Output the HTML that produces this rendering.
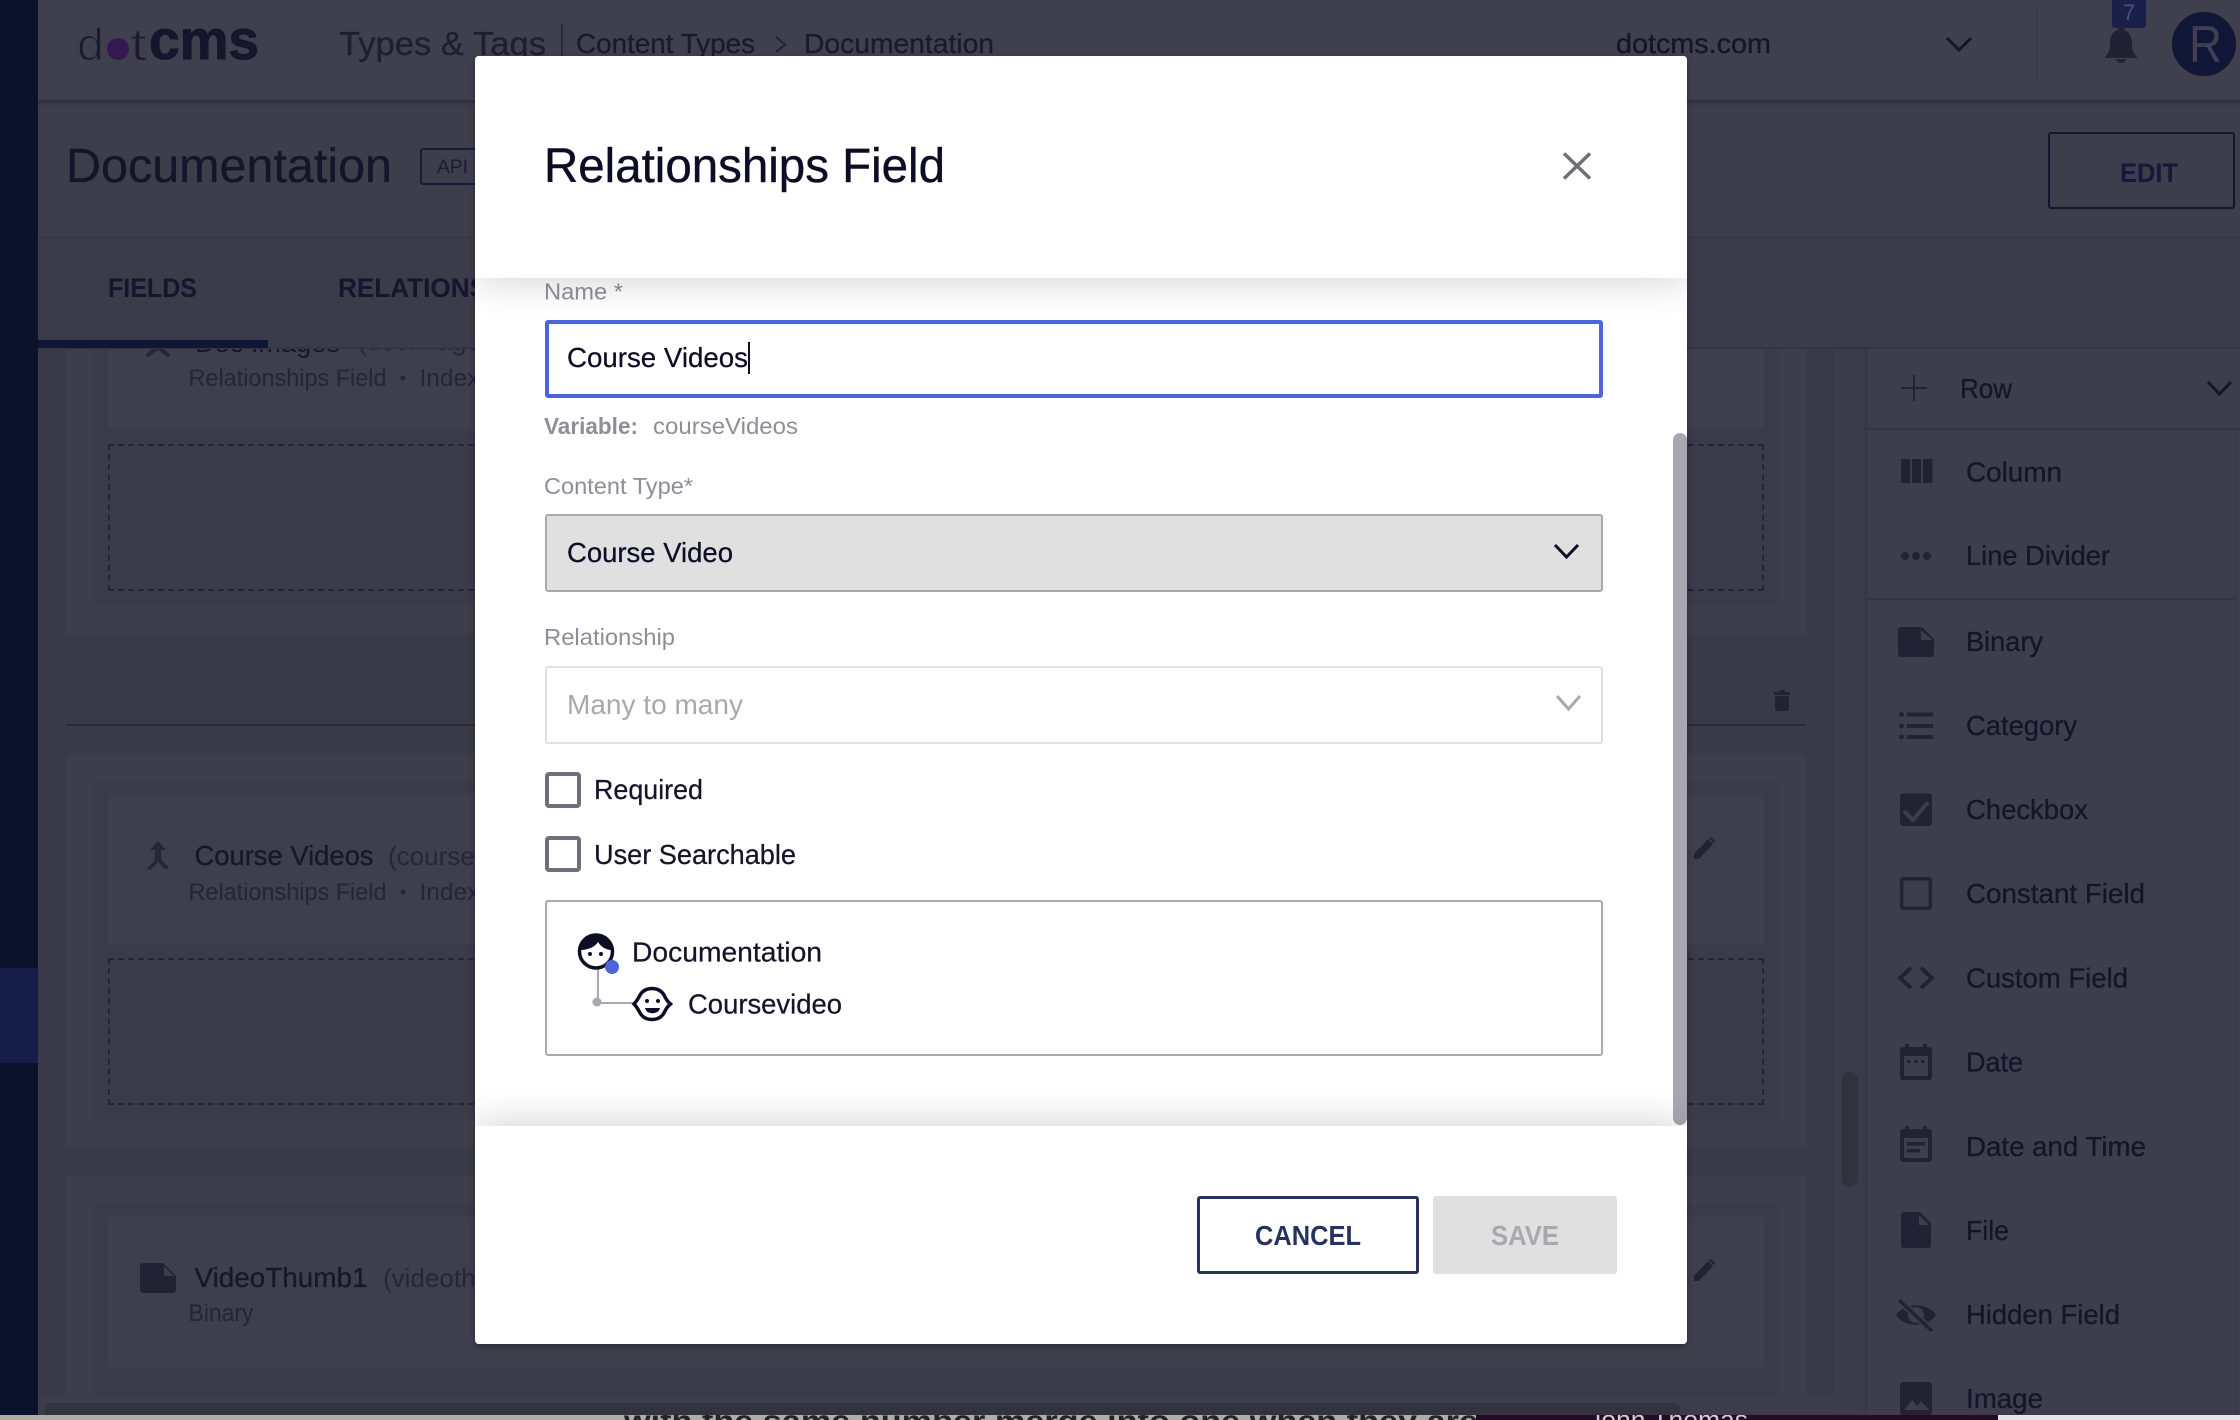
<!DOCTYPE html>
<html lang="en">
<head>
<meta charset="utf-8">
<title>Relationships Field</title>
<style>
html,body{margin:0;padding:0;width:2240px;height:1420px;overflow:hidden;background:#3a3947;font-family:"Liberation Sans",sans-serif}
.a{position:absolute;box-sizing:border-box}
svg{position:absolute;left:0;top:0;display:block}
svg text{font-family:"Liberation Sans",sans-serif}
#bg{position:absolute;left:0;top:0;width:2240px;height:1420px;overflow:hidden;filter:blur(.3px)}
#bg text{stroke-width:.3px}
#modal{position:absolute;left:475px;top:56px;width:1212px;height:1288px;background:#fff;border-radius:4px;overflow:hidden;box-shadow:0 2px 6px rgba(0,0,0,.3)}
#modalhead{position:absolute;left:0;top:0;width:1212px;height:222px;background:#fff;box-shadow:0 0 40px rgba(0,0,0,.2)}
#modalfoot{position:absolute;left:0;top:1070px;width:1212px;height:218px;background:#fff;box-shadow:0 0 40px rgba(0,0,0,.2)}
</style>
</head>
<body>
<div id="bg">
  <!-- page bands -->
  <div class="a" style="left:0;top:1415px;width:1476px;height:5px;background:#b0aea4"></div>
  <div class="a" style="left:1476px;top:1415px;width:522px;height:5px;background:#240b26"></div>
  <div class="a" style="left:1998px;top:1415px;width:242px;height:5px;background:#e6e6e6"></div>
  <div class="a" style="left:38px;top:0;width:2202px;height:1415px;background:#3a3947"></div>
  <div class="a" style="left:38px;top:0;width:2202px;height:103px;background:#403f4e;border-bottom:3px solid #33323f"></div>
  <div class="a" style="left:38px;top:106px;width:2202px;height:132px;background:#3e3d4b;border-bottom:2px solid #393846"></div>
  <div class="a" style="left:38px;top:238px;width:2202px;height:111px;background:#3c3b49;border-bottom:2px solid #353442"></div>
  <div class="a" style="left:38px;top:340px;width:230px;height:8px;background:#101636"></div>

  <!-- first row -->
  <div class="a" style="left:66px;top:349px;width:1740px;height:285px;background:#3e3d4b"></div>
  <div class="a" style="left:94px;top:349px;width:1684px;height:256px;background:#3b3a48"></div>
  <div class="a" style="left:108px;top:349px;width:1656px;height:80px;background:#3f3e4c"></div>
  <div class="a" style="left:108px;top:444px;width:1656px;height:147px;border:2px dashed #252436"></div>
  <div class="a" style="left:66px;top:724px;width:1740px;height:2px;background:#2a2938"></div>

  <!-- second row -->
  <div class="a" style="left:66px;top:754px;width:1740px;height:393px;background:#3e3d4b"></div>
  <div class="a" style="left:94px;top:782px;width:1684px;height:337px;background:#3b3a48"></div>
  <div class="a" style="left:108px;top:794px;width:1656px;height:150px;background:#3f3e4c"></div>
  <div class="a" style="left:108px;top:958px;width:1656px;height:147px;border:2px dashed #252436"></div>

  <!-- third row -->
  <div class="a" style="left:66px;top:1176px;width:1740px;height:220px;background:#3e3d4b"></div>
  <div class="a" style="left:94px;top:1204px;width:1684px;height:192px;background:#3b3a48"></div>
  <div class="a" style="left:108px;top:1217px;width:1656px;height:150px;background:#3f3e4c"></div>

  <!-- scrollbars -->
  <div class="a" style="left:1835px;top:349px;width:27px;height:1066px;background:#3c3b4a"></div>
  <div class="a" style="left:1842px;top:1072px;width:16px;height:115px;background:#32313e;border-radius:8px"></div>
  <div class="a" style="left:38px;top:1396px;width:1800px;height:19px;background:#3d3c4a"></div>
  <div class="a" style="left:45px;top:1403px;width:1635px;height:12px;background:#33323f;border-radius:6px 6px 0 0"></div>

  <!-- right panel -->
  <div class="a" style="left:1866px;top:349px;width:374px;height:1066px;background:#3e3d4b;border-left:2px solid #383745"></div>
  <div class="a" style="left:2235px;top:429px;width:2px;height:986px;background:#393846"></div>
  <div class="a" style="left:1866px;top:428px;width:374px;height:2px;background:#353442"></div>
  <div class="a" style="left:1866px;top:598px;width:369px;height:2px;background:#353442"></div>

  <!-- left rail -->
  <div class="a" style="left:0;top:0;width:38px;height:1415px;background:#0c122c"></div>
  <div class="a" style="left:0;top:968px;width:38px;height:95px;background:#161d47"></div>

  <!-- header items -->
  <div class="a" style="left:561px;top:24px;width:2px;height:32px;background:#2c2b3b"></div>
  <div class="a" style="left:2036px;top:5px;width:2px;height:78px;background:#3c3b49"></div>
  <div class="a" style="left:2112px;top:0;width:34px;height:28px;background:#1a2049;border-radius:0 0 3px 3px"></div>
  <div class="a" style="left:2172px;top:12px;width:64px;height:64px;background:#101636;border-radius:50%"></div>
  <div class="a" style="left:2048px;top:132px;width:187px;height:77px;border:2px solid #12162f;border-radius:3px"></div>
  <div class="a" style="left:420px;top:148px;width:80px;height:37px;border:2px solid #171c38;border-radius:3px"></div>

  <svg width="2240" height="1420" viewBox="0 0 2240 1420">
    <!-- logo -->
    <text x="77" y="60" font-size="45" fill="#1b1b30" stroke="#403f4e" style="stroke-width:1.2px" textLength="27" lengthAdjust="spacingAndGlyphs">d</text>
    <circle cx="118" cy="49" r="11" fill="#351852"/>
    <text x="130" y="60" font-size="45" fill="#1b1b30" stroke="#403f4e" style="stroke-width:1.2px" textLength="17" lengthAdjust="spacingAndGlyphs">t</text>
    <text x="149" y="59" font-size="56" font-weight="bold" fill="#15152c" textLength="110" lengthAdjust="spacingAndGlyphs" stroke="#15152c" style="stroke-width:1px">cms</text>

    <text x="339" y="55" font-size="33" fill="#1e1e30" stroke="#1e1e30" textLength="207" lengthAdjust="spacingAndGlyphs">Types &amp; Tags</text>
    <text x="576" y="53" font-size="27.5" fill="#1a1a2e" stroke="#1a1a2e" textLength="179" lengthAdjust="spacingAndGlyphs">Content Types</text>
    <path d="M776 37 L785 44.5 L776 52" fill="none" stroke="#222234" stroke-width="2"/>
    <text x="804" y="53" font-size="28" fill="#1a1a2e" stroke="#1a1a2e" textLength="190" lengthAdjust="spacingAndGlyphs">Documentation</text>
    <text x="1616" y="53" font-size="28" fill="#14142b" stroke="#14142b" textLength="155" lengthAdjust="spacingAndGlyphs">dotcms.com</text>
    <path d="M1947 38 L1959 50 L1971 38" fill="none" stroke="#14142b" stroke-width="3"/>
    <text x="2129" y="20" font-size="22" fill="#4a5080" text-anchor="middle">7</text>
    <path d="M2121 26 a3 3 0 0 1 3 4 c7 2 8 9 8 15 c0 6 2 9 5 12 v1 h-32 v-1 c3-3 5-6 5-12 c0-6 1-13 8-15 a3 3 0 0 1 3-4z M2116 59 h10 a5 4 0 0 1 -10 0z" fill="#222133"/>
    <text x="2189" y="62" font-size="52" fill="#3f3e52" textLength="33" lengthAdjust="spacingAndGlyphs">R</text>

    <text x="66" y="182" font-size="48" fill="#14142a" stroke="#14142a" textLength="326" lengthAdjust="spacingAndGlyphs">Documentation</text>
    <text x="437" y="173" font-size="19" fill="#171c38" textLength="31" lengthAdjust="spacingAndGlyphs">API</text>
    <text x="2120" y="182" font-size="27" font-weight="bold" fill="#14183a" textLength="58" lengthAdjust="spacingAndGlyphs">EDIT</text>
    <text x="108" y="297" font-size="27" font-weight="bold" fill="#14162f" textLength="89" lengthAdjust="spacingAndGlyphs">FIELDS</text>
    <text x="338" y="297" font-size="27" font-weight="bold" fill="#14162f" textLength="210" lengthAdjust="spacingAndGlyphs">RELATIONSHIPS</text>

    <!-- field rows -->
    <defs><clipPath id="c1"><rect x="38" y="349" width="2202" height="1071"/></clipPath></defs>
    <g clip-path="url(#c1)">
      <text x="195" y="352" font-size="28" fill="#16162d" textLength="145" lengthAdjust="spacingAndGlyphs">Doc Images</text>
      <text x="358" y="350" font-size="26" fill="#26253a">(docImages)</text>
      <path d="M147 356 L158 347 L169 356" fill="none" stroke="#26253a" stroke-width="4"/>
    </g>
    <text x="188.500" y="386" font-size="24.5" fill="#252438" textLength="198" lengthAdjust="spacingAndGlyphs">Relationships Field</text>
    <circle cx="403" cy="378" r="2.5" fill="#252438"/>
    <text x="419.500" y="386" font-size="24.5" fill="#252438">Indexed</text>

    <path d="M158 841 L150 850 H155 V858 C155 861 153 863 147 868 L150 870 C155 866 158 863 158 861 C160 865 163 867 166 870 L169 867 C165 864 161 861 161 857 V850 H166 Z" fill="#26253a"/>
    <text x="194.500" y="865" font-size="28" fill="#16162d" stroke="#16162d" textLength="179" lengthAdjust="spacingAndGlyphs">Course Videos</text>
    <text x="388" y="865" font-size="26" fill="#26253a">(courseVideos)</text>
    <text x="188.500" y="900" font-size="24.5" fill="#252438" textLength="198" lengthAdjust="spacingAndGlyphs">Relationships Field</text>
    <circle cx="403" cy="892" r="2.5" fill="#252438"/>
    <text x="419.500" y="900" font-size="24.5" fill="#252438">Indexed</text>

    <path d="M143 1263 H163 L176 1276 V1290 a3 3 0 0 1-3 3 H143 a3 3 0 0 1-3-3 V1266 a3 3 0 0 1 3-3z" fill="#232235"/>
    <path d="M164 1266 V1276 H174z" fill="#3e3d4b"/>
    <text x="194.5" y="1287" font-size="28" fill="#16162d" stroke="#16162d" textLength="173" lengthAdjust="spacingAndGlyphs">VideoThumb1</text>
    <text x="383" y="1287" font-size="26" fill="#26253a">(videothumb1)</text>
    <text x="188.500" y="1321" font-size="24.5" fill="#252438" textLength="65" lengthAdjust="spacingAndGlyphs">Binary</text>

    <!-- trash & pencils -->
    <path d="M1774 692 h5 l1-2 h4 l1 2 h5 v3 h-16z M1775 696 h14 v13 a2 2 0 0 1-2 2 h-10 a2 2 0 0 1-2-2z" fill="#232235"/>
    <path d="M1694 859 v-5 l14-15 5 5 -14 15z M1709 838 l2-1 4 4 -1 2z" fill="#232235"/>
    <path d="M1694 1281 v-5 l14-15 5 5 -14 15z M1709 1260 l2-1 4 4 -1 2z" fill="#232235"/>

    <!-- right panel labels -->
    <g font-size="27.5" fill="#14142b" stroke="#14142b">
      <text x="1960" y="398" textLength="52" lengthAdjust="spacingAndGlyphs">Row</text>
      <text x="1966" y="481.500" textLength="96" lengthAdjust="spacingAndGlyphs">Column</text>
      <text x="1966" y="565" textLength="144" lengthAdjust="spacingAndGlyphs">Line Divider</text>
      <text x="1966" y="651" textLength="77" lengthAdjust="spacingAndGlyphs">Binary</text>
      <text x="1966" y="735" textLength="111" lengthAdjust="spacingAndGlyphs">Category</text>
      <text x="1966" y="819" textLength="122" lengthAdjust="spacingAndGlyphs">Checkbox</text>
      <text x="1966" y="903" textLength="179" lengthAdjust="spacingAndGlyphs">Constant Field</text>
      <text x="1966" y="987.500" textLength="162" lengthAdjust="spacingAndGlyphs">Custom Field</text>
      <text x="1966" y="1071.500" textLength="57" lengthAdjust="spacingAndGlyphs">Date</text>
      <text x="1966" y="1156" textLength="180" lengthAdjust="spacingAndGlyphs">Date and Time</text>
      <text x="1966" y="1240" textLength="43" lengthAdjust="spacingAndGlyphs">File</text>
      <text x="1966" y="1324" textLength="154" lengthAdjust="spacingAndGlyphs">Hidden Field</text>
      <text x="1966" y="1408" textLength="77" lengthAdjust="spacingAndGlyphs">Image</text>
    </g>
    <!-- right panel icons -->
    <g fill="#232235">
      <path d="M1913 375 h2 v12 h12 v2 h-12 v12 h-2 v-12 h-12 v-2 h12z"/>
      <rect x="1901" y="459" width="9" height="24"/><rect x="1912" y="459" width="9" height="24"/><rect x="1923" y="459" width="9.500" height="24"/>
      <circle cx="1905" cy="556" r="4"/><circle cx="1916" cy="556" r="4"/><circle cx="1927" cy="556" r="4"/>
      <path d="M1901 627 H1922 L1934 639 V654 a3 3 0 0 1-3 3 H1901 a3 3 0 0 1-3-3 V630 a3 3 0 0 1 3-3z"/>
      <circle cx="1901.500" cy="714.500" r="2.500"/><circle cx="1901.500" cy="726" r="2.500"/><circle cx="1901.500" cy="737" r="2.500"/>
      <rect x="1907" y="712.500" width="26" height="4"/><rect x="1907" y="724" width="26" height="4"/><rect x="1907" y="735" width="26" height="4"/>
      <rect x="1900" y="793.500" width="32" height="32.500" rx="3"/>
      <path d="M1900 880 a3 3 0 0 1 3-3 h26 a3 3 0 0 1 3 3 v27 a3 3 0 0 1-3 3 h-26 a3 3 0 0 1-3-3z M1903.500 880.500 v26 h25 v-26z" fill-rule="evenodd"/>
      <path d="M1903 1047 h2 v-3 h4 v3 h14 v-3 h4 v3 h2 a3 3 0 0 1 3 3 v27 a3 3 0 0 1-3 3 h-26 a3 3 0 0 1-3-3 v-27 a3 3 0 0 1 3-3z M1904 1056 v20 h24 v-20z" fill-rule="evenodd"/>
      <rect x="1907" y="1060" width="3.500" height="3"/><rect x="1914" y="1060" width="3.500" height="3"/><rect x="1921" y="1060" width="3.500" height="3"/>
      <path d="M1903 1129 h2 v-3 h4 v3 h14 v-3 h4 v3 h2 a3 3 0 0 1 3 3 v27 a3 3 0 0 1-3 3 h-26 a3 3 0 0 1-3-3 v-27 a3 3 0 0 1 3-3z M1904 1138 v20 h24 v-20z" fill-rule="evenodd"/>
      <rect x="1907" y="1142" width="18" height="3.500"/><rect x="1907" y="1149" width="13" height="3.500"/>
      <path d="M1904 1212 H1920 L1931 1223 V1245 a3 3 0 0 1-3 3 H1904 a3 3 0 0 1-3-3 V1215 a3 3 0 0 1 3-3z"/>
      <path d="M1896 1315 C1904 1302 1928 1302 1936 1315 C1928 1328 1904 1328 1896 1315z M1916 1307 a8 8 0 1 0 .01 0z" fill-rule="evenodd"/>
      <rect x="1900" y="1382" width="32" height="33" rx="3"/>
    </g>
    <path d="M1919 1215 V1225 H1929z" fill="#3e3d4b"/>
    <path d="M1921 630 V640 H1932z" fill="#3e3d4b"/>
    <path d="M1904 811 L1913 820 L1928 802" fill="none" stroke="#3e3d4b" stroke-width="4"/>
    <path d="M1911 968 L1900 978 L1911 988 M1921 968 L1932 978 L1921 988" fill="none" stroke="#232235" stroke-width="4"/>
    <path d="M1899 1300 L1932 1331" stroke="#3e3d4b" stroke-width="7"/>
    <path d="M1899 1300 L1932 1331" stroke="#232235" stroke-width="3.500"/>
    <path d="M1904 1410 L1912 1400 L1917 1406 L1921 1401 L1929 1410z" fill="#3e3d4b"/>
    <path d="M2208 382 L2219.500 394 L2231 382" fill="none" stroke="#14142b" stroke-width="3"/>

    <!-- bottom peek -->
    <defs><clipPath id="c2"><rect x="0" y="1415" width="2240" height="5"/></clipPath></defs>
    <g clip-path="url(#c2)">
      <text x="624" y="1431" font-size="30" font-weight="bold" fill="#242424" textLength="854" lengthAdjust="spacingAndGlyphs">with the same number merge into one when they are</text>
      <text x="1588" y="1429" font-size="27" fill="#d8c8d8" textLength="160" lengthAdjust="spacingAndGlyphs">John Thomas</text>
    </g>
  </svg>
</div>

<div id="modal">
  <!-- inputs -->
  <div class="a" style="left:70px;top:264px;width:1058px;height:78px;border:4px solid #4c64dc;border-radius:3px;background:#fff"></div>
  <div class="a" style="left:70px;top:458px;width:1058px;height:78px;border:2px solid #a9a8b1;border-radius:3px;background:#e0e0e0"></div>
  <div class="a" style="left:70px;top:610px;width:1058px;height:78px;border:2px solid #e0e0e0;border-radius:3px;background:#fff"></div>
  <div class="a" style="left:70px;top:716px;width:36px;height:36px;border:4px solid #6f6e7b;border-radius:4px;background:#fff"></div>
  <div class="a" style="left:70px;top:780px;width:36px;height:36px;border:4px solid #6f6e7b;border-radius:4px;background:#fff"></div>
  <div class="a" style="left:70px;top:844px;width:1058px;height:156px;border:2px solid #a9a8b1;border-radius:3px;background:#fff"></div>
  <div class="a" style="left:1198px;top:377px;width:14px;height:692px;background:#a9a8b1;border-radius:7px"></div>

  <svg width="1212" height="1288" viewBox="475 56 1212 1288">
    <text x="544" y="299.500" font-size="23.500" fill="#8f8e98" textLength="79" lengthAdjust="spacingAndGlyphs">Name *</text>
    <text x="567" y="367" font-size="28" fill="#0d0d25" stroke="#0d0d25" stroke-width=".25" textLength="181" lengthAdjust="spacingAndGlyphs">Course Videos</text>
    <rect x="748" y="342" width="2" height="32" fill="#0d0d25"/>
    <text x="544" y="434" font-size="23.500" font-weight="bold" fill="#8f8e98" textLength="94" lengthAdjust="spacingAndGlyphs">Variable:</text>
    <text x="653" y="434" font-size="23.500" fill="#8f8e98" textLength="145" lengthAdjust="spacingAndGlyphs">courseVideos</text>
    <text x="544" y="494" font-size="23.500" fill="#8f8e98" textLength="149" lengthAdjust="spacingAndGlyphs">Content Type*</text>
    <text x="567" y="562" font-size="28" fill="#0d0d25" stroke="#0d0d25" stroke-width=".25" textLength="166" lengthAdjust="spacingAndGlyphs">Course Video</text>
    <path d="M1555 545 L1566.500 557 L1578 545" fill="none" stroke="#0d0d25" stroke-width="3"/>
    <text x="544" y="645" font-size="23.500" fill="#8f8e98" textLength="131" lengthAdjust="spacingAndGlyphs">Relationship</text>
    <text x="567" y="714" font-size="28" fill="#a9a8b1" textLength="176" lengthAdjust="spacingAndGlyphs">Many to many</text>
    <path d="M1557 696 L1568.500 709 L1580 696" fill="none" stroke="#a9a8b1" stroke-width="3"/>
    <text x="594" y="799" font-size="28" fill="#14142b" stroke="#14142b" stroke-width=".25" textLength="109" lengthAdjust="spacingAndGlyphs">Required</text>
    <text x="594" y="864" font-size="28" fill="#14142b" stroke="#14142b" stroke-width=".25" textLength="202" lengthAdjust="spacingAndGlyphs">User Searchable</text>

    <path d="M598 968 V1003 H634 M598 1003" fill="none" stroke="#a9a8b1" stroke-width="2"/>
    <circle cx="597" cy="1002" r="4.500" fill="#a9a8b1"/>
    <circle cx="596" cy="951.500" r="16.500" fill="#fff" stroke="#0d0d25" stroke-width="3.500"/>
    <path d="M580 950 C580 940 588 934 596 934 C604 934 612 940 612 950 C606 950 601 947 598 942 C595 947 588 950 580 950z" fill="#0d0d25"/>
    <circle cx="590" cy="954" r="2" fill="#0d0d25"/><circle cx="601" cy="954" r="2" fill="#0d0d25"/>
    <circle cx="612" cy="967" r="7" fill="#4c64dc"/>
    <path d="M634 1004 C637 1001 638 999 640 995 C643 990 648 988.500 652 988.500 C656 988.500 661 990 664 995 C666 999 667 1001 670.500 1004 C667 1007 666 1009 664 1013 C661 1018 656 1019.500 652 1019.500 C648 1019.500 643 1018 640 1013 C638 1009 637 1007 634 1004z" fill="#fff" stroke="#0d0d25" stroke-width="3.500"/>
    <circle cx="647" cy="1001" r="2" fill="#0d0d25"/><circle cx="658" cy="1001" r="2" fill="#0d0d25"/>
    <path d="M645 1008 H660 C659 1015 646 1015 645 1008z" fill="#0d0d25"/>
    <text x="632" y="961.500" font-size="28" fill="#14142b" stroke="#14142b" stroke-width=".25" textLength="190" lengthAdjust="spacingAndGlyphs">Documentation</text>
    <text x="688" y="1013.500" font-size="28" fill="#14142b" stroke="#14142b" stroke-width=".25" textLength="154" lengthAdjust="spacingAndGlyphs">Coursevideo</text>
  </svg>

  <div id="modalhead"></div>
  <div id="modalfoot"></div>
  <div class="a" style="left:722px;top:1140px;width:222px;height:78px;border:3px solid #26335f;border-radius:3px;background:#fff"></div>
  <div class="a" style="left:958px;top:1140px;width:184px;height:78px;border-radius:3px;background:#e0e0e0"></div>

  <svg width="1212" height="1288" viewBox="475 56 1212 1288">
    <text x="544" y="182" font-size="48" fill="#0d0d25" textLength="401" lengthAdjust="spacingAndGlyphs" stroke="#0d0d25" stroke-width=".4">Relationships Field</text>
    <path d="M1564 153.500 L1590 178.500 M1590 153.500 L1564 178.500" stroke="#6f6e7b" stroke-width="3.500" fill="none"/>
    <text x="1255" y="1245" font-size="27.500" font-weight="bold" fill="#26335f" textLength="106" lengthAdjust="spacingAndGlyphs">CANCEL</text>
    <text x="1491" y="1245" font-size="27.500" font-weight="bold" fill="#a9a8b1" textLength="68" lengthAdjust="spacingAndGlyphs">SAVE</text>
  </svg>
</div>
</body>
</html>
